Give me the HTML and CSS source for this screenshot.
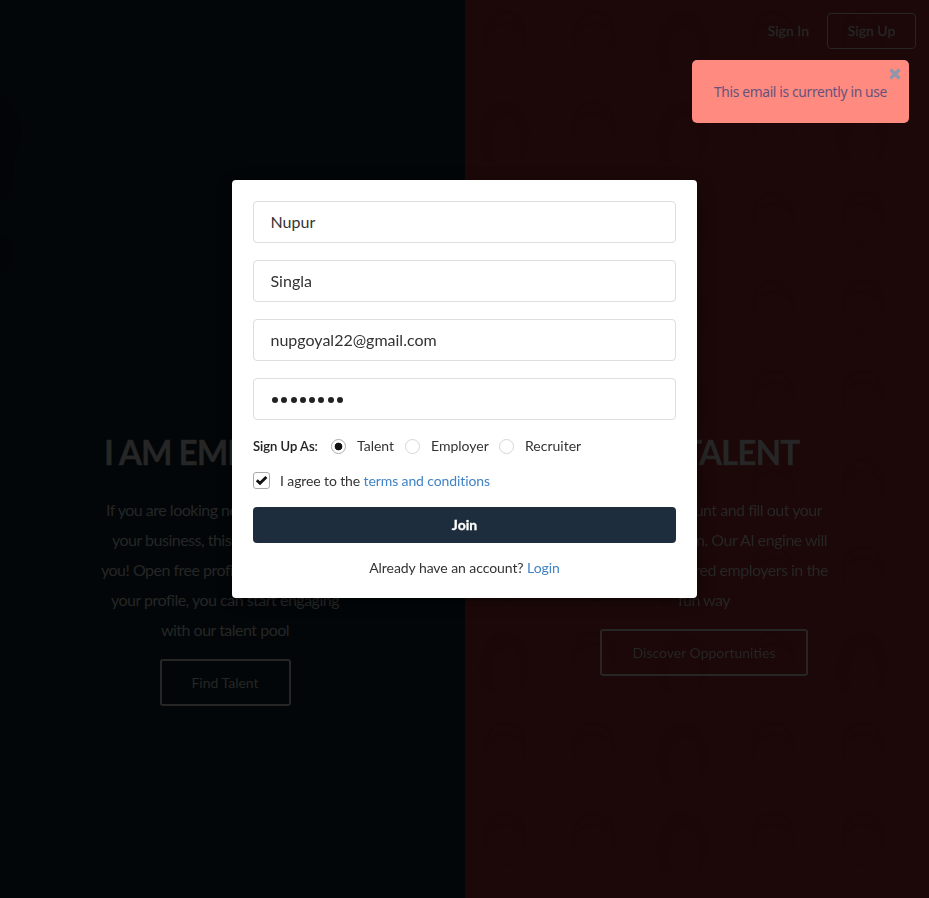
FILE: index.html
```html
<!DOCTYPE html>
<html lang="en">
<head>
<meta charset="utf-8">
<title>Sign up</title>
<link rel="stylesheet" href="styles.css">
</head>
<body>
<main class="split">
  <section class="half employer">
    <svg class="scene" viewBox="0 0 465 898" aria-hidden="true"><path d="M0 95Q24 112 20 140Q12 160 12 180Q8 200 0 203ZM0 236L14 243L10 264L0 275Z" fill="#020407"/></svg>
    <div class="pitch">
      <h1>I AM EMPLOYER</h1>
      <p><span class="a1">If you are looking new talent for</span><span class="a2">your business, this is right for</span><span class="a3">you! Open free profile. With</span><span class="mid">your profile, you can start engaging</span><span class="mid">with our talent pool</span></p>
      <a class="outline">Find Talent</a>
    </div>
  </section>
  <section class="half talent">
    <svg class="scene" viewBox="0 0 464 898" aria-hidden="true">
      <defs>
        <g id="f" fill="none" stroke="#180606" stroke-width="2.5"><path d="M-19 6Q-23-25 0-27Q23-25 19 6M-17-8Q0-24 17-8"/><path d="M-8 23Q0 29 8 23" stroke-width="1.5"/></g>
        <g id="l" fill="#180606"><path d="M-20 32Q-31 10-21-11Q-13-29 2-27Q22-24 24 2Q25 21 15 31Q19 9 12-7Q2-17-8-8Q-19 11-12 31Z"/></g>
        <g id="r"><use href="#f" x="40"/><use href="#f" x="129"/><use href="#l" x="218"/><use href="#f" x="308"/><use href="#f" x="398"/></g>
        <g id="s"><use href="#l" x="40"/><use href="#f" x="129"/><use href="#l" x="218"/><use href="#f" x="308"/><use href="#l" x="398"/></g>
      </defs>
      <g opacity=".25"><use href="#r" y="39"/><use href="#s" y="129"/><use href="#r" y="220"/><use href="#r" y="308"/><use href="#r" y="398"/><use href="#r" y="487"/><use href="#r" y="574"/><use href="#s" y="660"/><use href="#r" y="750"/><use href="#r" y="840"/></g>
    </svg>
    <nav class="nav"><a>Sign In</a><a class="signup">Sign Up</a></nav>
    <div class="pitch">
      <h1>I AM TALENT</h1>
      <p><span class="b1">Open free account and fill out your</span><span class="b2">career ambition. Our AI engine will</span><span class="b3">find your preferred employers in the</span><span class="mid">fun way</span></p>
      <a class="outline wide">Discover Opportunities</a>
    </div>
  </section>
</main>
<form class="modal">
  <input type="text" value="Nupur" aria-label="First name">
  <input type="text" value="Singla" aria-label="Last name">
  <input type="text" value="nupgoyal22@gmail.com" aria-label="Email">
  <div class="password"><i></i><i></i><i></i><i></i><i></i><i></i><i></i><i></i></div>
  <div class="roles"><b>Sign Up As:</b><i class="radio on"></i><span class="r1">Talent</span><i class="radio"></i><span class="r2">Employer</span><i class="radio"></i><span>Recruiter</span></div>
  <div class="agree"><i class="box"><svg viewBox="0 0 15 15"><path d="M2.8 7.2L6 10.2L12.4 4" fill="none" stroke="#111" stroke-width="2.9"/></svg></i><span>I agree to the <a>terms and conditions</a></span></div>
  <button type="button">Join</button>
  <div class="login">Already have an account? <a>Login</a></div>
</form>
<aside class="toast"><span>This email is currently in use</span><svg class="close" viewBox="0 0 12 12"><path d="M1.5 1.5L10.5 10.5M10.5 1.5L1.5 10.5" stroke="#8e98ac" stroke-width="3.2"/></svg></aside>
</body>
</html>
```
FILE: styles.css
```css
* { box-sizing: border-box; }
body { margin: 0; font-family: Lato, "Liberation Sans", sans-serif; font-size: 14px; overflow: hidden; color: #262626; }
.split { display: grid; grid-template-columns: 465px 464px; height: 898px; }
.half { position: relative; overflow: hidden; }
.employer { background: #020608; }
.talent { background: #1c0808; }
.scene { position: absolute; inset: 0; width: 100%; height: 100%; }
.nav { position: absolute; top: 13px; right: 13px; display: flex; align-items: center; gap: 18px; font-weight: 500; line-height: 20px; -webkit-text-stroke: .3px #262626; }
.signup { width: 89px; height: 36px; border: 1px solid #262626; border-radius: 4px; line-height: 34px; text-align: center; }
.pitch { position: relative; padding-top: 430px; width: 248px; margin-left: 101px; display: flex; flex-direction: column; align-items: center; }
.talent .pitch { margin-left: 115px; }
h1 { margin: 0; font-size: 33.4px; line-height: 44px; font-weight: 700; white-space: nowrap; letter-spacing: -1.05px; -webkit-text-stroke: .3px #262626; }
p { margin: 21px 0 0; width: 100%; font-size: 16px; line-height: 30px; white-space: nowrap; letter-spacing: -.5px; }
p span { display: block; }
.mid { text-align: center; }
.a1 { padding-left: 5px; }
.a2 { padding-left: 11px; }
.b1, .b2, .b3 { display: flex; justify-content: flex-end; }
.b1 { padding-right: 6px; }
.b2 { padding-right: 1px; }
.outline { margin-top: 14px; width: 131px; height: 47px; border: 2px solid #262626; border-radius: 3px; text-align: center; line-height: 43px; }
.wide { width: 208px; }
.modal { position: absolute; left: 232px; top: 180px; width: 465px; height: 418px; padding: 21px; background: #fff; border-radius: 4px; box-shadow: 1px 3px 3px rgba(0,0,0,.2), 1px 3px 15px 2px rgba(0,0,0,.2); color: #333; }
input, .password { display: block; width: 100%; height: 42px; margin: 0 0 17px; border: 1px solid #dcdddd; border-radius: 4px; padding: 0 16px 2px 16.5px; background: #fff; font: 16px Lato, sans-serif; color: #333; }
.password { display: flex; align-items: center; gap: 3.3px; padding: 1px 16px 0 18px; }
.password i { width: 6px; height: 6px; border-radius: 50%; background: #222; }
.roles { display: flex; align-items: center; height: 20px; margin-top: -1px; line-height: 20px; white-space: nowrap; }
.roles b { width: 78px; font-weight: 500; font-size: 13px; color: #222; -webkit-text-stroke: .15px #222; }
.radio { flex: none; width: 15px; height: 15px; border: 1px solid #d4d4d5; border-radius: 50%; margin-right: 11px; }
.radio.on { border-color: #aaa; background: radial-gradient(circle, #111 3.5px, transparent 4.2px); }
.r1 { width: 48px; }
.r2 { width: 68px; }
.agree { display: flex; align-items: center; height: 20px; margin-top: 15px; line-height: 20px; letter-spacing: -.11px; }
.box { width: 17px; height: 17px; border: 1px solid #aaa; border-radius: 3px; margin-right: 10px; position: relative; top: -1px; }
.box svg { display: block; width: 15px; height: 15px; }
.modal a { color: #4183c4; }
button { display: block; width: 100%; height: 36px; margin: 16px 0 0; padding: 0 0 2px; border: 0; border-radius: 4px; background: #1e2d3d; color: #fff; font: 700 14px Lato, sans-serif; -webkit-text-stroke: .3px #fff; }
.login { margin-top: 15px; line-height: 20px; text-align: center; letter-spacing: -.07px; }
.toast { position: absolute; left: 692px; top: 60px; width: 217px; height: 63px; border-radius: 5px; background: #ff8a80; color: #66537a; font: 13.8px/64px "Noto Sans", sans-serif; padding-left: 22px; white-space: nowrap; }
.toast span { letter-spacing: -.34px; }
.close { position: absolute; right: 8px; top: 8px; width: 12px; height: 12px; }
```
